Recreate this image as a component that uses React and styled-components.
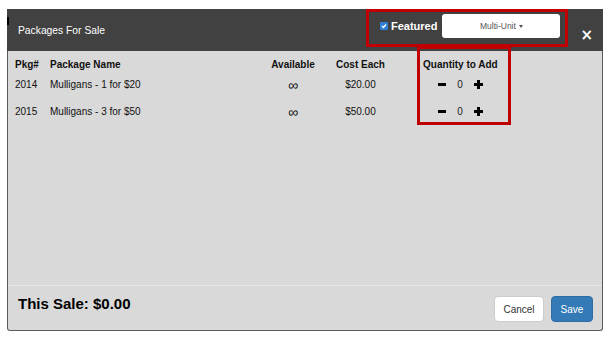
import styled, { createGlobalStyle } from "styled-components"

const GlobalStyle = createGlobalStyle`
    body {
        margin: 0;
        background: #fff;
        font-family: "Liberation Sans", Arial, sans-serif;
    }
`

const Page = styled.div`
    padding: 9px 9px 0 7px;
`

const Modal = styled.div`
    position: relative;
    width: 596px;
    height: 322px;
    box-sizing: border-box;
    display: flex;
    flex-direction: column;
    background: #d9d9d9;
    border: 1px solid #5a5a5a;
    border-top: none;
    border-radius: 0 0 3px 3px;

    &::before {
        content: "";
        position: absolute;
        left: -1px;
        top: 8px;
        width: 2px;
        height: 8px;
        background: #000;
    }
`

const Header = styled.div`
    height: 42px;
    display: flex;
    align-items: flex-start;
    background: #414141;
    color: #fff;
    margin: 0 -1px;
    padding: 0 10px 0 11px;
`

const Title = styled.div`
    flex: 1;
    align-self: center;
    font-size: 10.3px;
    margin-top: 1px;
`

const FeatureGroup = styled.div`
    display: flex;
    align-items: center;
    margin-top: 5px;
`

const Check = styled.span`
    flex: none;
    width: 8px;
    height: 8px;
    border-radius: 1px;
    background: #2f7fd6;
    display: flex;
    align-items: center;
    justify-content: center;
`

const FeatureLabel = styled.span`
    font-weight: bold;
    font-size: 11px;
    margin-left: 3px;
`

const Dropdown = styled.div`
    width: 118px;
    height: 24px;
    margin-left: 5px;
    background: #fff;
    border-radius: 3px;
    color: #555;
    font-size: 8.5px;
    display: flex;
    align-items: center;
    justify-content: center;
    gap: 3px;
`

const Caret = styled.span`
    border-top: 3px solid #555;
    border-left: 2.5px solid transparent;
    border-right: 2.5px solid transparent;
`

const Close = styled.div`
    margin-left: 20px;
    margin-top: 19px;
    font-size: 15px;
    font-weight: bold;
    line-height: 1;
    font-family: "DejaVu Sans", sans-serif;
`

const Body = styled.div`
    flex: 1;
    padding: 4px 7px;
`

const Table = styled.table`
    border-collapse: collapse;
    table-layout: fixed;
    font-size: 10px;
    color: #111;
`

const Th = styled.th`
    width: ${(p) => p.$w}px;
    text-align: ${(p) => p.$align || "center"};
    padding: 0;
    height: 19px;
    font-weight: bold;
    white-space: nowrap;
`

const Td = styled.td`
    text-align: ${(p) => p.$align || "center"};
    padding: 0;
    height: 27px;
    vertical-align: top;
    padding-top: 5px;
    box-sizing: border-box;
    white-space: nowrap;
`

const Infinity = styled.span`
    font-size: 14px;
    line-height: 13px;
`

const Qty = styled.div`
    display: flex;
    align-items: center;
    justify-content: center;
    gap: 11px;
    height: 13px;
    margin-top: -1px;
`

const Count = styled.span`
    color: #222;
`

const Footer = styled.div`
    height: 45px;
    display: flex;
    align-items: center;
    padding: 0 9px 0 10px;
    border-top: 1px solid #e6e6e6;
    box-sizing: border-box;
`

const Total = styled.div`
    flex: 1;
    font-size: 15px;
    font-weight: bold;
    color: #000;
    margin-top: -9px;
`

const Button = styled.button`
    width: ${(p) => p.$w}px;
    height: 26px;
    padding: 0;
    margin-left: 7px;
    margin-top: 2px;
    border-radius: 4px;
    border: 1px solid ${(p) => (p.$primary ? "#2e6da4" : "#ccc")};
    background: ${(p) => (p.$primary ? "#337ab7" : "#fff")};
    color: ${(p) => (p.$primary ? "#fff" : "#333")};
    font-family: inherit;
    font-size: 10px;
`

const Mark = styled.div`
    position: absolute;
    left: ${(p) => p.$x}px;
    top: ${(p) => p.$y}px;
    width: ${(p) => p.$w}px;
    height: ${(p) => p.$h}px;
    border: 3px solid #c00000;
    box-sizing: border-box;
    pointer-events: none;
`

const MinusIcon = () => (
    <svg width="8" height="9" viewBox="0 0 8 9">
        <rect x="0" y="3" width="8" height="3" fill="#000" />
    </svg>
)

const PlusIcon = () => (
    <svg width="9" height="9" viewBox="0 0 9 9">
        <rect x="0" y="3" width="9" height="3" fill="#000" />
        <rect x="3" y="0" width="3" height="9" fill="#000" />
    </svg>
)

const packages = [
    { id: 2014, name: "Mulligans - 1 for $20", cost: "$20.00" },
    { id: 2015, name: "Mulligans - 3 for $50", cost: "$50.00" },
]

const App = () => {
    return (
        <Page>
            <GlobalStyle />
            <Modal>
                <Header>
                    <Title>Packages For Sale</Title>
                    <FeatureGroup>
                        <Check>
                            <svg width="6" height="6" viewBox="0 0 6 6">
                                <path d="M1 3 L2.5 4.5 L5 1.5" stroke="#fff" strokeWidth="1.2" fill="none" />
                            </svg>
                        </Check>
                        <FeatureLabel>Featured</FeatureLabel>
                        <Dropdown>
                            Multi-Unit <Caret />
                        </Dropdown>
                    </FeatureGroup>
                    <Close>×</Close>
                </Header>
                <Body>
                    <Table>
                        <thead>
                            <tr>
                                <Th $w={35} $align="left">Pkg#</Th>
                                <Th $w={200} $align="left">Package Name</Th>
                                <Th $w={86}>Available</Th>
                                <Th $w={46}>Cost Each</Th>
                                <Th $w={151}>Quantity to Add</Th>
                            </tr>
                        </thead>
                        <tbody>
                            {packages.map((p) => (
                                <tr key={p.id}>
                                    <Td $align="left">{p.id}</Td>
                                    <Td $align="left">{p.name}</Td>
                                    <Td><Infinity>∞</Infinity></Td>
                                    <Td>{p.cost}</Td>
                                    <Td>
                                        <Qty>
                                            <MinusIcon />
                                            <Count>0</Count>
                                            <PlusIcon />
                                        </Qty>
                                    </Td>
                                </tr>
                            ))}
                        </tbody>
                    </Table>
                </Body>
                <Footer>
                    <Total>This Sale: $0.00</Total>
                    <Button $w={50}>Cancel</Button>
                    <Button $w={42} $primary>Save</Button>
                </Footer>
                <Mark $x={358} $y={0} $w={202} $h={38} />
                <Mark $x={409} $y={37} $w={94} $h={79} />
            </Modal>
        </Page>
    )
}

export default App
